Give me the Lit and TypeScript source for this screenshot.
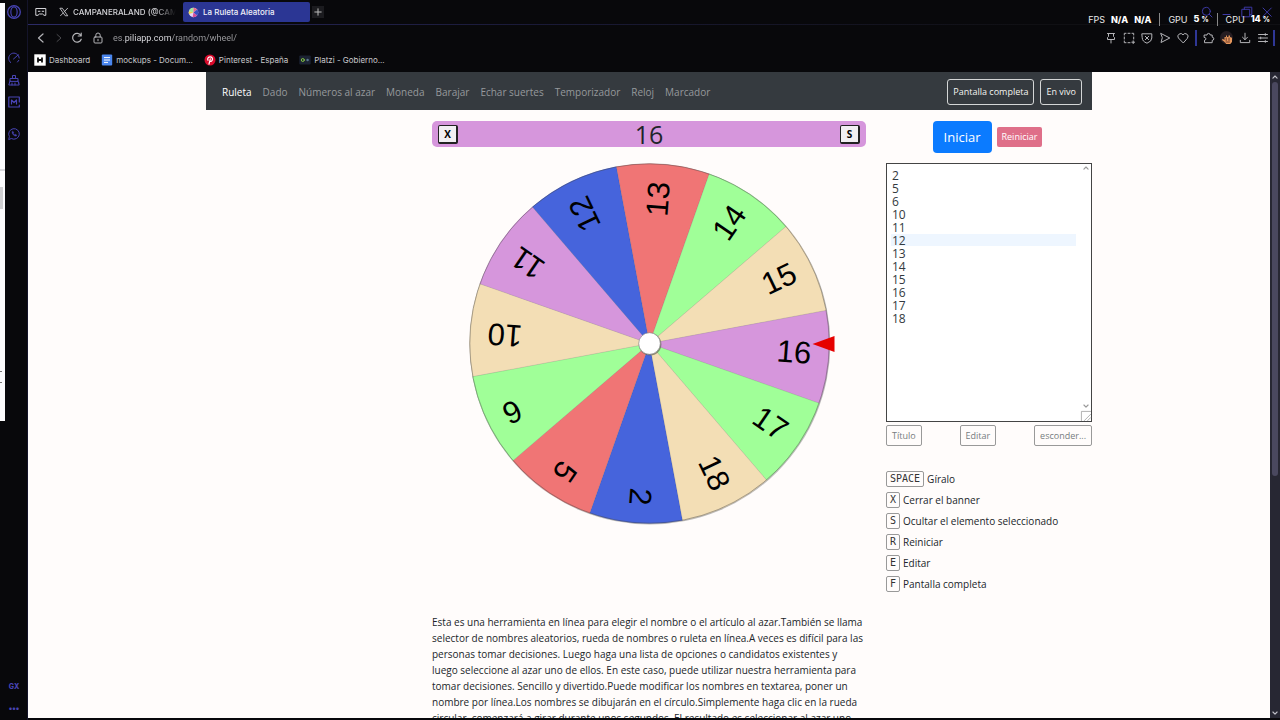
import { LitElement, html, svg, css } from "lit";
import { customElement, property, state } from "lit/decorators.js";

const ORCHID = "#d696dc";
const BLUE = "#4664dc";
const RED = "#f07575";
const GREEN = "#a0ff98";
const WHEAT = "#f3deb5";

const SLICES = [
  { label: "2", color: BLUE },
  { label: "5", color: RED },
  { label: "6", color: GREEN },
  { label: "10", color: WHEAT },
  { label: "11", color: ORCHID },
  { label: "12", color: BLUE },
  { label: "13", color: RED },
  { label: "14", color: GREEN },
  { label: "15", color: WHEAT },
  { label: "16", color: ORCHID },
  { label: "17", color: GREEN },
  { label: "18", color: WHEAT },
];

@customElement("prize-wheel")
class PrizeWheel extends LitElement {
  @property({ type: Number }) rotation = 79.4;

  static styles = css`
    :host {
      display: block;
    }
    .wheel {
      display: block;
      width: 100%;
      max-width: 434px;
      margin: 0 auto;
      overflow: visible;
    }
    .label {
      font-family: "Liberation Sans", Arial, sans-serif;
      font-size: 31px;
      fill: #000;
    }
  `;

  private slice(item: { label: string; color: string }, index: number) {
    const step = 360 / SLICES.length;
    const from = ((this.rotation + index * step) * Math.PI) / 180;
    const to = ((this.rotation + (index + 1) * step) * Math.PI) / 180;
    const r = 180;
    const d = `M0 0L${r * Math.cos(from)} ${r * Math.sin(from)}A${r} ${r} 0 0 1 ${r * Math.cos(to)} ${r * Math.sin(to)}Z`;
    const mid = this.rotation + (index + 0.5) * step;
    return svg`
      <path d=${d} fill=${item.color} stroke="#444" stroke-opacity=".18" stroke-width=".5"></path>
      <text class="label" transform="rotate(${mid})" x="162" y="8" text-anchor="end">${item.label}</text>`;
  }

  render() {
    return html`<svg class="wheel" viewBox="-217.5 -180.5 434 360" role="img" aria-label="Ruleta">
      <circle cx="0.4" cy=".6" r="180.4" fill="#777" opacity=".5"></circle>
      ${SLICES.map((s, i) => this.slice(s, i))}
      <circle r="179.7" fill="none" stroke="#444" stroke-opacity=".55" stroke-width=".7"></circle>
      <circle cx=".6" cy=".8" r="11.3" fill="#665" opacity=".7"></circle>
      <circle r="10.8" fill="#fff" stroke="#777" stroke-width=".6"></circle>
      <path d="M163 .5L185-7.5V8.5Z" fill="#e60000"></path>
    </svg>`;
  }
}

const icon = (body: unknown, size = 12) => html`<svg
  width=${size}
  height=${size}
  viewBox="0 0 12 12"
  fill="none"
  stroke="currentColor"
  stroke-width="1"
  stroke-linecap="round"
  stroke-linejoin="round"
  aria-hidden="true"
>${body}</svg>`;

const I = {
  opera: svg`<circle cx="6" cy="6" r="5.4" stroke-width="1.1"></circle><ellipse cx="6" cy="6" rx="2.7" ry="4.4"></ellipse>`,
  gauge: svg`<path d="M2.7 10.6A5.3 5.3 0 1 1 11.2 6M5.5 7L10.3 2.8M10.8 8.3L9.5 10"></path>`,
  broom: svg`<path d="M4.5 4.5V1.5H7.5V4.5M2 7V4.5H10V7ZM2 7L.8 11H11.2L10 7M4 11V9M7 11V9M11 9V9.1"></path>`,
  modbox: svg`<path d="M11.3 6V1H.8V11H11.3V9M3.5 8V4L6 6.5L8.5 4V8" stroke-width="1.2"></path>`,
  whatsapp: svg`<path d="M.8 11.2L1.4 8.6A5.3 5.3 0 1 1 3.6 10.7Z"></path><path d="M4 3.8C4 6.4 5.8 8 8.2 8.2L8.7 7L7.2 6.2L6.5 6.8C5.9 6.5 5.4 6 5.2 5.4L5.8 4.8L5 3.4Z" fill="currentColor" stroke-width=".4"></path>`,
  pad: svg`<path d="M1.2 2.5H10.8V9.3H9L7.6 8H4.4L3 9.3H1.2ZM3.3 5.3H5M7.2 5.3H8.7"></path>`,
  x: svg`<path d="M1.5 1.5H4L10.5 10.5H8ZM10.3 1.5L6.8 5.3M5.2 7L1.8 10.5"></path>`,
  plus: svg`<path d="M6 2.8V9.2M2.8 6H9.2"></path>`,
  back: svg`<path d="M8 2L3.5 6L8 10" stroke-width="1.2"></path>`,
  forward: svg`<path d="M4 2.5L8 6L4 9.5"></path>`,
  reload: svg`<path d="M9.8 3.5A4.4 4.4 0 1 0 10.2 7.2M10.2 1.2V4H7.2" stroke-width="1.2"></path>`,
  lock: svg`<rect x="2" y="5" width="8" height="6" rx="1"></rect><path d="M3.8 5V3.2A2.2 2.2 0 0 1 8.2 3.2V5M6 7.3V8.8"></path>`,
  pin: svg`<path d="M2.5 1.5H9.5M3.5 1.5V4.5L2.5 5.5V7.5H9.5V5.5L8.5 4.5V1.5M6 7.5V11"></path>`,
  snap: svg`<path d="M1.3 3V1.3H3M5 1.3H7M9 1.3H10.7V3M10.7 5V7M1.3 5V7M1.3 9V10.7H3M5 10.7H7M10.2 8.8V11.6M8.8 10.2H11.6"></path>`,
  shield: svg`<path d="M1.2 1.8H10.8V6Q10.8 9.5 6 11.2Q1.2 9.5 1.2 6ZM4.3 4.3L7.7 7.7M7.7 4.3L4.3 7.7"></path>`,
  send: svg`<path d="M2 1.5L10.8 6L2 10.5L3.2 6Z"></path>`,
  heart: svg`<path d="M6 10.7L1.4 6A2.8 2.8 0 0 1 6 2.8A2.8 2.8 0 0 1 10.6 6Z"></path>`,
  puzzle: svg`<path d="M1.5 3H4A1.6 1.6 0 0 1 7.2 3H9.2V5.2A1.6 1.6 0 0 1 9.2 8.4V10.7H1.5V8.2A1.4 1.4 0 0 0 1.5 5.4Z"></path>`,
  download: svg`<path d="M6 1.2V7.6M3.5 5.2L6 7.7L8.5 5.2M1.3 8.3V10.6H10.7V8.3"></path>`,
  menu: svg`<path d="M1.5 2.5H10.5M1.5 6H10.5M1.5 9.5H10.5M8.3 1.6V3.4M3.7 5.1V6.9M8.3 8.6V10.4"></path>`,
  search: svg`<circle cx="5.3" cy="5.3" r="4"></circle><path d="M8.3 8.3L11 11"></path>`,
  min: svg`<path d="M2 8.5H9"></path>`,
  max: svg`<path d="M3.3 3.3V1.2H10.8V8.6H8.7M1.2 3.3H8.7V10.8H1.2Z"></path>`,
  close: svg`<path d="M2 2L10.3 10.3M10.3 2L2 10.3"></path>`,
  up: svg`<path d="M3.5 7.3L6 4.8L8.5 7.3" stroke-width="1.4"></path>`,
  down: svg`<path d="M3.5 4.8L6 7.3L8.5 4.8" stroke-width="1.4"></path>`,
  colorWheel: svg`<g stroke="none"><circle cx="6" cy="6" r="5.2" fill="#e6d5f4"></circle><path d="M6 6L1 4.5A5.2 5.2 0 0 1 6 .8Z" fill="#a0e89c"></path><path d="M6 6V.8A5.2 5.2 0 0 1 10 2.7Z" fill="#e66a8a"></path><path d="M6 6L10 9.3A5.2 5.2 0 0 1 5 11.1Z" fill="#d84f98"></path><path d="M6 6L1 7.5A5.2 5.2 0 0 1 1 4.5Z" fill="#f0d24a"></path><path d="M6 6L10 2.7A5.2 5.2 0 0 1 10 9.3Z" fill="#3b4fc0"></path></g>`,
  h: svg`<g stroke="none"><rect x=".3" y=".3" width="11.4" height="11.4" fill="#fff"></rect></g><path d="M4 3.5V8.5M8 3.5V8.5M4 6H8" stroke="#111" stroke-width="1.8" stroke-linecap="butt"></path>`,
  doc: svg`<rect x=".8" y=".5" width="10.4" height="11" rx="1" fill="#4a86ee" stroke="none"></rect><path d="M3 3.6H9M3 6H9M3 8.4H7" stroke="#fff" stroke-linecap="butt"></path>`,
  pinterest: svg`<circle cx="6" cy="6" r="5.5" fill="#d80b2c" stroke="none"></circle><path d="M5 10.2L6.3 4.8M4 6.3C3 4.3 4.5 2.9 6.2 2.9C8 2.9 8.9 4.3 8.3 6C7.8 7.5 6.4 7.8 5.8 6.9" stroke="#fff" stroke-width="1.2"></path>`,
  platzi: svg`<rect x=".3" y="1.5" width="11.4" height="9" rx="1" fill="#1b2232" stroke="none"></rect><circle cx="3.8" cy="6" r="1.5" stroke="#83c341"></circle><circle cx="8.6" cy="6" r="1.2" fill="#5b7890" stroke="none"></circle>`,
  avatar: svg`<g stroke="none"><circle cx="5.5" cy="5.5" r="6.5" fill="#261d22"></circle><path d="M3.5 5H5V3.5H6V5H7.5V3.5H9V5L11 5.7V10L9.3 12H5.3L3 9.5L1 8L1.6 6.8L3.5 8Z" fill="#e5965c"></path><path d="M5.2 6V8.5M8 6V8.5M5 10H8.5" stroke="#5c3025" stroke-width=".9"></path></g>`,
};

const NAV = ["Ruleta", "Dado", "Números al azar", "Moneda", "Barajar", "Echar suertes", "Temporizador", "Reloj", "Marcador"];

const SHORTCUTS = [
  ["SPACE", "Gíralo"],
  ["X", "Cerrar el banner"],
  ["S", "Ocultar el elemento seleccionado"],
  ["R", "Reiniciar"],
  ["E", "Editar"],
  ["F", "Pantalla completa"],
];

const BOOKMARKS = [
  { icon: I.h, text: "Dashboard" },
  { icon: I.doc, text: "mockups - Docum..." },
  { icon: I.pinterest, text: "Pinterest - España" },
  { icon: I.platzi, text: "Platzi - Gobierno..." },
];

@customElement("app-root")
class AppRoot extends LitElement {
  @state() private names = SLICES.map((s) => s.label).join("\n");

  static styles = css`
    :host {
      display: flex;
      height: 100vh;
      overflow: hidden;
      position: relative;
      background: #08080b;
      color: #212529;
      font-family: "Open Sans", "Noto Sans", sans-serif;
      font-size: 10px;
      line-height: 16px;
    }
    * {
      box-sizing: border-box;
    }
    button,
    input,
    textarea {
      font: inherit;
      color: inherit;
      margin: 0;
    }
    button {
      display: inline-flex;
      align-items: center;
      justify-content: center;
      padding: 0;
      border: 0;
      background: none;
      white-space: nowrap;
    }
    a {
      color: inherit;
      text-decoration: none;
      white-space: nowrap;
    }
    svg {
      display: block;
      flex: none;
      overflow: visible;
    }

    .behind {
      width: 5px;
      height: 58%;
      margin-top: 3px;
      background: linear-gradient(#d8d8dc, #d8d8dc) 0 166px / 5px 2px no-repeat,
        linear-gradient(#cfcfd2, #cfcfd2) 0 184px / 3px 22px no-repeat,
        linear-gradient(#777, #777) 0 368px / 2px 1px no-repeat,
        linear-gradient(#777, #777) 0 379px / 2px 1px no-repeat, #fbfbfd;
      flex: none;
    }
    .side {
      flex: none;
      width: 23px;
      padding: 5px 5px 7px 1px;
      display: flex;
      flex-direction: column;
      align-items: center;
      gap: 10px;
      color: #4844b4;
      border-right: 1px solid #14142a;
    }
    .side .first {
      margin-bottom: 23px;
    }
    .side .chat {
      margin-top: 10px;
    }
    .side .gx {
      margin-top: auto;
      font: 800 7px/12px Inter, sans-serif;
    }
    .side .more {
      font: 800 8px/10px Inter, sans-serif;
    }

    .browser {
      flex: 1;
      min-width: 0;
      display: flex;
      flex-direction: column;
      font-family: Inter, Roboto, sans-serif;
      padding-bottom: 2px;
    }
    .tabs {
      display: flex;
      align-items: center;
      height: 24px;
      padding: 0 7px;
      color: #d4d4d8;
      font-size: 8px;
      font-weight: 500;
    }
    .tab {
      display: flex;
      align-items: center;
      height: 20px;
      gap: 4px;
      white-space: nowrap;
    }
    .tab.idle {
      width: 117px;
      margin-left: 12px;
      mask-image: linear-gradient(to right, #000 96px, transparent 117px);
    }
    .tab.active {
      width: 127px;
      margin-left: 7px;
      padding-left: 5px;
      background: #2b3694;
      border-radius: 2px;
      color: #f0f0f8;
    }
    .newtab {
      width: 12px;
      height: 12px;
      margin-left: 2px;
      background: #1b1b1f;
      color: #bbb;
    }
    .window {
      margin-left: auto;
      display: flex;
      gap: 8px;
      color: #3c38a4;
    }
    .address {
      height: 27px;
      display: flex;
      align-items: center;
      gap: 6px;
      padding: 0 5px 0 7px;
      color: #b4b4b8;
      border-top: 1px solid;
      border-image: linear-gradient(to right, #2c2b66, #1a1a38 40%, #101014 80%) 1;
    }
    .address .dim {
      color: #4a4a4e;
    }
    .address .lock {
      margin-left: 3px;
    }
    .url {
      flex: 1;
      min-width: 0;
      height: 16px;
      border: 0;
      padding: 0 3px;
      font-family: Roboto, sans-serif;
      font-size: 9px;
      color: transparent;
      background: linear-gradient(to right, #a0a0a4 15px, #e4e4e8 15px 62px, #a0a0a4 62px);
      background-clip: text;
    }
    .bar {
      width: 2px;
      height: 16px;
      background: #2f3796;
    }
    .tools {
      display: flex;
      align-items: center;
      gap: 6px;
    }
    .tools .last {
      margin-left: -2px;
    }
    .bookmarks {
      display: flex;
      align-items: center;
      gap: 11px;
      height: 21px;
      padding: 0 6px 3px;
      color: #c8c8cc;
      font-size: 8px;
    }
    .bookmarks a {
      display: flex;
      align-items: center;
      gap: 3px;
    }

    .view {
      flex: 1;
      min-height: 0;
      display: flex;
      font-family: "Open Sans", "Noto Sans", sans-serif;
    }
    .page {
      flex: 1;
      min-width: 0;
      overflow: hidden;
      background: #fffcfb;
    }
    .scroll {
      flex: none;
      width: 10px;
      display: flex;
      flex-direction: column;
      align-items: center;
      background: #272733;
      color: #c0c0c8;
    }
    .thumb {
      width: 6px;
      height: 61%;
      margin-bottom: auto;
      border-radius: 3px;
      background: #4a485f;
    }
    .container {
      width: 100%;
      max-width: 886px;
      margin: 0 auto;
    }
    .navbar {
      display: flex;
      align-items: center;
      gap: 6px;
      height: 38px;
      padding: 2px 10px 0 16px;
      background: #353a3f;
      color: #96999c;
    }
    .links {
      display: flex;
      flex: 1;
      gap: 11px;
    }
    .links .current {
      color: #fff;
    }
    .outline {
      height: 26px;
      padding: 0 5px;
      font-size: 9px;
      color: #f4f4f0;
      border: 1px solid #d4d6d6;
      border-radius: 3px;
    }
    .grid {
      display: grid;
      grid-template-columns: 206px minmax(0, 1fr) 206px;
      column-gap: 20px;
      padding-top: 11px;
    }
    .main {
      grid-column: 2;
    }
    .banner {
      display: flex;
      align-items: center;
      justify-content: space-between;
      height: 26px;
      padding: 0 6px;
      margin-bottom: 16px;
      border-radius: 5px;
      background: #d696dc;
      font-size: 25px;
      line-height: 28px;
    }
    .key {
      width: 20px;
      height: 19px;
      border: 1px solid #222;
      border-width: 1px 2px 2px 1px;
      border-radius: 2px;
      background: #f1eff2;
      color: #000;
      font-size: 10px;
      line-height: 16px;
      font-weight: 700;
    }
    .about {
      margin: 91px 0 0;
      padding-right: 2px;
    }
    .actions {
      display: flex;
      align-items: center;
      justify-content: center;
      gap: 5px;
      height: 32px;
      margin-bottom: 10px;
      padding-right: 3px;
    }
    .start {
      height: 32px;
      padding: 0 11px;
      border-radius: 4px;
      background: #0b7bff;
      color: #fff;
      font-size: 13px;
    }
    .reset {
      height: 20px;
      padding: 0 5px;
      border-radius: 2px;
      background: #df6f89;
      color: #fff;
      font-size: 9px;
    }
    .editor {
      position: relative;
      height: 259px;
    }
    .names {
      display: block;
      width: 100%;
      height: 100%;
      padding: 5px;
      border: 1px solid #444;
      border-radius: 0;
      background: linear-gradient(#eef6ff, #eef6ff) 4px 70px / 185px 12px no-repeat, #fff;
      color: #333a40;
      font-size: 12px;
      line-height: 13px;
      resize: none;
      overflow: hidden;
    }
    .decor {
      position: absolute;
      inset: 0 1px 1px auto;
      display: flex;
      flex-direction: column;
      align-items: center;
      width: 10px;
      color: #999;
      pointer-events: none;
    }
    .decor .bottom {
      margin-top: auto;
    }
    .small {
      display: flex;
      justify-content: space-between;
      margin-top: 3px;
    }
    .small button {
      height: 21px;
      padding: 0 5px;
      border: 1px solid #999;
      border-radius: 2px;
      color: #777c80;
      font-size: 9px;
    }
    .keys {
      margin: 22px 0 0;
      padding: 0;
      list-style: none;
    }
    .keys li {
      display: flex;
      align-items: center;
      gap: 3px;
      height: 21px;
    }
    kbd {
      height: 16px;
      padding: 0 3px;
      border: 1px solid #999;
      border-radius: 2px;
      font: 10px/14px "DejaVu Sans Mono", monospace;
      color: #333;
    }

    .stats {
      position: absolute;
      top: 11px;
      right: 10px;
      display: flex;
      align-items: center;
      gap: 6px;
      color: #e8e8ea;
      font: 9px/16px Inter, sans-serif;
      white-space: nowrap;
    }
    .stats b {
      color: #fff;
      font-weight: 800;
    }
    .stats small {
      font-size: 7px;
    }
    .stats i {
      width: 1px;
      height: 13px;
      margin: 0 2px;
      background: #888;
    }
  `;

  render() {
    return html`
      <div class="behind"></div>
      <aside class="side">
        <button class="first" aria-label="Opera">${icon(I.opera, 14)}</button>
        <button aria-label="GX Control">${icon(I.gauge)}</button>
        <button aria-label="GX Cleaner">${icon(I.broom)}</button>
        <button aria-label="Mods">${icon(I.modbox)}</button>
        <button class="chat" aria-label="WhatsApp">${icon(I.whatsapp)}</button>
        <button class="gx">GX</button>
        <button class="more">•••</button>
      </aside>
      <div class="browser">
        <div class="tabs">
          ${icon(I.pad)}
          <div class="tab idle">${icon(I.x, 10)}<span>CAMPANERALAND (@CAM</span></div>
          <div class="tab active">${icon(I.colorWheel, 11)}<span>La Ruleta Aleatoria</span></div>
          <button class="newtab" aria-label="Nueva pestaña">${icon(I.plus)}</button>
          <div class="window">
            <button aria-label="Buscar">${icon(I.search)}</button>
            <button aria-label="Minimizar">${icon(I.min)}</button>
            <button aria-label="Restaurar">${icon(I.max)}</button>
            <button aria-label="Cerrar">${icon(I.close)}</button>
          </div>
        </div>
        <div class="address">
          <button aria-label="Atrás">${icon(I.back)}</button>
          <button class="dim" aria-label="Adelante">${icon(I.forward)}</button>
          <button aria-label="Recargar">${icon(I.reload)}</button>
          <span class="lock">${icon(I.lock)}</span>
          <input class="url" aria-label="Dirección" .value=${"es.piliapp.com/random/wheel/"} />
          <div class="tools">
            ${[I.pin, I.snap, I.shield, I.send, I.heart].map((p) => html`<button aria-label="Herramienta">${icon(p)}</button>`)}
            <span class="bar"></span>
            <button aria-label="Extensiones">${icon(I.puzzle)}</button>
            <button aria-label="Perfil">${icon(I.avatar)}</button>
            <button aria-label="Descargas">${icon(I.download)}</button>
            <button aria-label="Menú">${icon(I.menu)}</button>
            <span class="bar last"></span>
          </div>
        </div>
        <nav class="bookmarks">
          ${BOOKMARKS.map((b) => html`<a href="#">${icon(b.icon)}<span>${b.text}</span></a>`)}
        </nav>
        <div class="view">
          <div class="page">
            <div class="container">
              <nav class="navbar">
                <div class="links">
                  ${NAV.map((n, i) => html`<a href="#" class=${i === 0 ? "current" : ""}>${n}</a>`)}
                </div>
                <button class="outline">Pantalla completa</button>
                <button class="outline">En vivo</button>
              </nav>
              <div class="grid">
                <main class="main">
                  <div class="banner">
                    <button class="key">X</button><span>16</span><button class="key">S</button>
                  </div>
                  <prize-wheel></prize-wheel>
                  <p class="about">
                    Esta es una herramienta en línea para elegir el nombre o el artículo al azar.También se llama
                    selector de nombres aleatorios, rueda de nombres o ruleta en línea.A veces es difícil para las
                    personas tomar decisiones. Luego haga una lista de opciones o candidatos existentes y luego
                    seleccione al azar uno de ellos. En este caso, puede utilizar nuestra herramienta para tomar
                    decisiones. Sencillo y divertido.Puede modificar los nombres en textarea, poner un nombre por
                    línea.Los nombres se dibujarán en el círculo.Simplemente haga clic en la rueda circular, comenzará
                    a girar durante unos segundos. El resultado es seleccionar al azar uno
                  </p>
                </main>
                <section>
                  <div class="actions">
                    <button class="start">Iniciar</button>
                    <button class="reset">Reiniciar</button>
                  </div>
                  <div class="editor">
                    <textarea class="names" aria-label="Nombres" .value=${this.names}
                      @input=${(e: Event) => (this.names = (e.target as HTMLTextAreaElement).value)}></textarea>
                    <div class="decor">
                      ${icon(I.up, 10)}
                      <span class="bottom">${icon(I.down, 10)}</span>
                      ${icon(svg`<path d="M.5 11.5V.5H11.5M4 11.5L11.5 4M8 11.5L11.5 8" stroke-width=".9"></path>`, 10)}
                    </div>
                  </div>
                  <div class="small">
                    <button>Título</button><button>Editar</button><button>esconder...</button>
                  </div>
                  <ul class="keys">
                    ${SHORTCUTS.map(([k, t]) => html`<li><kbd>${k}</kbd><span>${t}</span></li>`)}
                  </ul>
                </section>
              </div>
            </div>
          </div>
          <div class="scroll">
            ${icon(I.up, 10)}
            <div class="thumb"></div>
            ${icon(I.down, 10)}
          </div>
        </div>
      </div>
      <div class="stats">
        <span>FPS</span><b>N/A</b><b>N/A</b><i></i><span>GPU</span><b>5 <small>%</small></b><i></i><span>CPU</span
        ><b>14 <small>%</small></b>
      </div>
    `;
  }
}
